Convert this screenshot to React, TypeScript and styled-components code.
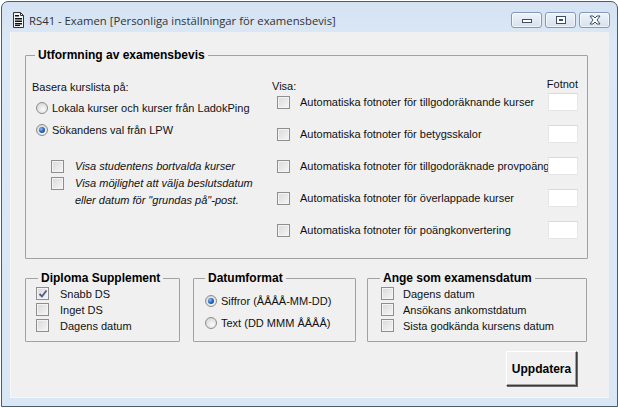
import styled, { createGlobalStyle } from "styled-components";

const GlobalStyle = createGlobalStyle`
  html, body {
    margin: 0;
    background: #ffffff;
  }
  * {
    box-sizing: border-box;
  }
`;

const Window = styled.div`
  width: 617px;
  height: 406px;
  margin: 1px 0 0 1px;
  border: 1px solid #4e5b6c;
  border-radius: 7px 7px 0 0;
  background: linear-gradient(#d4e2f2, #dce8f5 40px, #d9e6f4);
  display: flex;
  flex-direction: column;
  overflow: hidden;
`;

const TitleBar = styled.div`
  height: 30px;
  flex: none;
  display: flex;
  align-items: center;
  padding: 6px 7px 0 11px;
`;

const TitleText = styled.span`
  flex: 1;
  margin-left: 5px;
  font-family: "Open Sans", "Noto Sans", sans-serif;
  font-size: 11.3px;
  color: #333;
  white-space: nowrap;
`;

const CaptionGroup = styled.div`
  display: flex;
  gap: 3px;
`;

const CaptionButton = styled.div`
  width: 31px;
  height: 16px;
  border: 1px solid #8599b3;
  border-radius: 3px;
  background: linear-gradient(#eef3fa, #d6e1ee);
  box-shadow: inset 0 0 0 1px rgba(255, 255, 255, 0.6);
  display: flex;
  align-items: center;
  justify-content: center;
`;

const Frame = styled.div`
  flex: 1;
  display: flex;
  padding: 0 8px 8px 8px;
`;

const Client = styled.div`
  flex: 1;
  background: #f0f0f0;
  border-left: 1px solid #f7f7f7;
  border-bottom: 1px solid #f7f7f7;
  display: flex;
  flex-direction: column;
  padding: 16px 21px 0 14px;
  font-family: "Liberation Sans", Arial, sans-serif;
  font-size: 11px;
  color: #111;
`;

const Group = styled.fieldset<{ $width?: number }>`
  margin: 0;
  padding: 0;
  min-width: 0;
  border: 1px solid #a2a2a2;
  border-radius: 1px;
  ${(p) => (p.$width ? `width: ${p.$width}px; flex: none;` : "")}
`;

const Legend = styled.legend<{ $offset: number }>`
  margin-left: ${(p) => p.$offset}px;
  padding: 0 3px;
  font-family: "Liberation Sans", Arial, sans-serif;
  font-weight: bold;
  font-size: 12px;
  line-height: 14px;
  color: #000;
`;

const MainBody = styled.div`
  display: flex;
  padding: 18px 0 18px 6px;
`;

const LeftColumn = styled.div`
  width: 240px;
  flex: none;
`;

const Label = styled.div`
  line-height: 14px;
  white-space: nowrap;
`;

const RadioList = styled.div`
  margin-top: 3px;
  padding-left: 4px;
`;

const RadioRow = styled.label<{ $height: number }>`
  display: flex;
  align-items: center;
  gap: 4px;
  height: ${(p) => p.$height}px;
  white-space: nowrap;
`;

const Radio = styled.span<{ $checked?: boolean }>`
  width: 12px;
  height: 12px;
  flex: none;
  border-radius: 50%;
  border: 1px solid #8c8c8c;
  background: radial-gradient(circle at 60% 65%, #fbfbfb 0, #e6e6e6 45%, #cfcfcf 100%);
  display: flex;
  align-items: center;
  justify-content: center;
  &::after {
    content: "";
    display: ${(p) => (p.$checked ? "block" : "none")};
    width: 6px;
    height: 6px;
    border-radius: 50%;
    background: radial-gradient(circle at 35% 35%, #8cc3f2 0, #2a6bc2 45%, #0e3a78 100%);
  }
`;

const OptionList = styled.div`
  margin-top: 17px;
  padding-left: 19px;
`;

const CheckRow = styled.label<{ $gap: number; $line?: number }>`
  display: flex;
  align-items: flex-start;
  gap: ${(p) => p.$gap}px;
  line-height: ${(p) => p.$line ?? 17}px;
  white-space: nowrap;
`;

const ItalicText = styled.span`
  font-style: italic;
`;

const Box = styled.span<{ $top?: number }>`
  width: 13px;
  height: 13px;
  flex: none;
  margin-top: ${(p) => p.$top ?? 2}px;
  border: 1px solid #8e8e8e;
  background: linear-gradient(135deg, #d9d9d9, #f6f6f6);
  box-shadow: inset 0 0 0 1px #f4f4f4;
  display: flex;
  align-items: center;
  justify-content: center;
`;

const RightColumn = styled.div`
  flex: 1;
  padding-right: 8px;
`;

const HeaderRow = styled.div`
  display: flex;
  justify-content: space-between;
  line-height: 12px;
`;

const FootnoteHead = styled.span`
  margin-top: -2px;
  margin-right: 1px;
`;

const NoteList = styled.div`
  display: flex;
  flex-direction: column;
  gap: 12px;
`;

const NoteRow = styled.div`
  display: grid;
  grid-template-columns: 13px 1fr 30px;
  column-gap: 10px;
  align-items: center;
  height: 20px;
  padding-left: 5px;
  white-space: nowrap;
`;

const NoteText = styled.span`
  margin-right: -12px;
`;

const NoteInput = styled.div`
  width: 30px;
  height: 18px;
  margin-left: -1px;
  background: #fff;
  border: 1px solid #e6e6e6;
  border-top-color: #dadada;
`;

const BottomRow = styled.div`
  display: flex;
  margin-top: 12px;
`;

const SmallBody = styled.div<{ $pad: string }>`
  padding: ${(p) => p.$pad};
`;

const ButtonRow = styled.div`
  display: flex;
  justify-content: flex-end;
  margin-top: 9px;
  padding-right: 11px;
`;

const ActionButton = styled.button`
  width: 71px;
  height: 35px;
  padding: 0;
  font-family: "Liberation Sans", Arial, sans-serif;
  font-weight: bold;
  font-size: 12px;
  color: #000;
  background: #f0f0f0;
  border: 1px solid;
  border-color: #ffffff #3c3c3c #3c3c3c #ffffff;
  box-shadow: inset -1px -1px 0 #a0a0a0, 1px 1px 0 #6a6a6a;
`;

function Check() {
  return (
    <svg width="10" height="10" viewBox="0 0 10 10">
      <path d="M1.5 5 L4 7.5 L8.5 1.5" fill="none" stroke="#4a5d8c" strokeWidth="1.8" />
    </svg>
  );
}

function CheckBox({ checked, top }: { checked?: boolean; top?: number }) {
  return <Box $top={top}>{checked && <Check />}</Box>;
}

function DocIcon() {
  return (
    <svg width="11" height="16" viewBox="0 0 11 16">
      <path d="M0.5 0.5 H7.5 L10.5 3.5 V15.5 H0.5 Z" fill="#f4f4f4" stroke="#333" />
      <path d="M7.5 0.5 V3.5 H10.5" fill="none" stroke="#333" />
      <rect x="2" y="3" width="4" height="1.5" fill="#111" />
      <rect x="2" y="6" width="7" height="1.5" fill="#111" />
      <rect x="2" y="8.5" width="7" height="1.5" fill="#111" />
      <rect x="2" y="11" width="7" height="1.5" fill="#111" />
      <rect x="2" y="13" width="5" height="1" fill="#111" />
    </svg>
  );
}

function MinIcon() {
  return (
    <svg width="12" height="8" viewBox="0 0 12 8">
      <rect x="1.5" y="3.5" width="9" height="3" fill="#fff" stroke="#3d4e66" />
    </svg>
  );
}

function MaxIcon() {
  return (
    <svg width="12" height="10" viewBox="0 0 12 10">
      <rect x="1.5" y="1.5" width="9" height="7" fill="#fff" stroke="#3d4e66" />
      <rect x="4" y="4" width="4" height="2" fill="#3d4e66" />
    </svg>
  );
}

function CloseIcon() {
  return (
    <svg width="14" height="10" viewBox="0 0 14 10">
      <path
        d="M2 1 H5 L7 3 L9 1 H12 L9 5 L12 9 H9 L7 7 L5 9 H2 L5 5 Z"
        fill="#fff"
        stroke="#3d4e66"
        strokeWidth="1"
        strokeLinejoin="round"
      />
    </svg>
  );
}

const notes = [
  "Automatiska fotnoter för tillgodoräknande kurser",
  "Automatiska fotnoter för betygsskalor",
  "Automatiska fotnoter för tillgodoräknade provpoäng",
  "Automatiska fotnoter för överlappade kurser",
  "Automatiska fotnoter för poängkonvertering",
];

function App() {
  return (
    <>
      <GlobalStyle />
      <Window>
        <TitleBar>
          <DocIcon />
          <TitleText>RS41 - Examen [Personliga inställningar för examensbevis]</TitleText>
          <CaptionGroup>
            <CaptionButton>
              <MinIcon />
            </CaptionButton>
            <CaptionButton>
              <MaxIcon />
            </CaptionButton>
            <CaptionButton>
              <CloseIcon />
            </CaptionButton>
          </CaptionGroup>
        </TitleBar>
        <Frame>
          <Client>
            <Group>
              <Legend $offset={9}>Utformning av examensbevis</Legend>
              <MainBody>
                <LeftColumn>
                  <Label>Basera kurslista på:</Label>
                  <RadioList>
                    <RadioRow $height={22}>
                      <Radio />
                      Lokala kurser och kurser från LadokPing
                    </RadioRow>
                    <RadioRow $height={22}>
                      <Radio $checked />
                      Sökandens val från LPW
                    </RadioRow>
                  </RadioList>
                  <OptionList>
                    <CheckRow $gap={11}>
                      <CheckBox />
                      <ItalicText>Visa studentens bortvalda kurser</ItalicText>
                    </CheckRow>
                    <CheckRow $gap={11}>
                      <CheckBox />
                      <ItalicText>
                        Visa möjlighet att välja beslutsdatum
                        <br />
                        eller datum för "grundas på"-post.
                      </ItalicText>
                    </CheckRow>
                  </OptionList>
                </LeftColumn>
                <RightColumn>
                  <HeaderRow>
                    <span>Visa:</span>
                    <FootnoteHead>Fotnot</FootnoteHead>
                  </HeaderRow>
                  <NoteList>
                    {notes.map((n) => (
                      <NoteRow key={n}>
                        <CheckBox top={0} />
                        <NoteText>{n}</NoteText>
                        <NoteInput />
                      </NoteRow>
                    ))}
                  </NoteList>
                </RightColumn>
              </MainBody>
            </Group>
            <BottomRow>
              <Group $width={155}>
                <Legend $offset={12}>Diploma Supplement</Legend>
                <SmallBody $pad="1px 0 7px 10px">
                  <CheckRow $gap={11} $line={16}>
                    <CheckBox checked top={1} />
                    Snabb DS
                  </CheckRow>
                  <CheckRow $gap={11} $line={16}>
                    <CheckBox top={1} />
                    Inget DS
                  </CheckRow>
                  <CheckRow $gap={11} $line={16}>
                    <CheckBox top={1} />
                    Dagens datum
                  </CheckRow>
                </SmallBody>
              </Group>
              <Group $width={163} style={{ marginLeft: 13 }}>
                <Legend $offset={11}>Datumformat</Legend>
                <SmallBody $pad="5px 0 6px 11px">
                  <RadioRow $height={22}>
                    <Radio $checked />
                    Siffror (ÅÅÅÅ-MM-DD)
                  </RadioRow>
                  <RadioRow $height={22}>
                    <Radio />
                    Text (DD MMM ÅÅÅÅ)
                  </RadioRow>
                </SmallBody>
              </Group>
              <Group $width={220} style={{ marginLeft: 11 }}>
                <Legend $offset={12}>Ange som examensdatum</Legend>
                <SmallBody $pad="1px 0 7px 13px">
                  <CheckRow $gap={9} $line={16}>
                    <CheckBox top={1} />
                    Dagens datum
                  </CheckRow>
                  <CheckRow $gap={9} $line={16}>
                    <CheckBox top={1} />
                    Ansökans ankomstdatum
                  </CheckRow>
                  <CheckRow $gap={9} $line={16}>
                    <CheckBox top={1} />
                    Sista godkända kursens datum
                  </CheckRow>
                </SmallBody>
              </Group>
            </BottomRow>
            <ButtonRow>
              <ActionButton>Uppdatera</ActionButton>
            </ButtonRow>
          </Client>
        </Frame>
      </Window>
    </>
  );
}

export default App;
